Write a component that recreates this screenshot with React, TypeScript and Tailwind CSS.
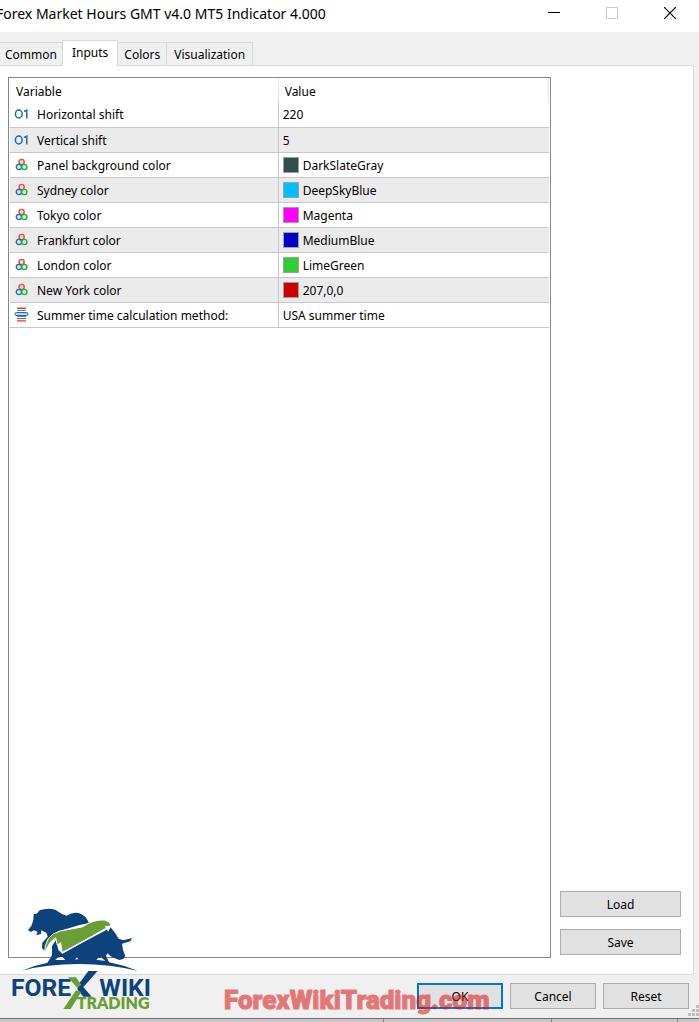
import { useState } from 'react';

type Row = { kind: 'int' | 'color' | 'enum'; name: string; value: string; swatch?: string };

const rows: Row[] = [
  { kind: 'int', name: 'Horizontal shift', value: '220' },
  { kind: 'int', name: 'Vertical shift', value: '5' },
  { kind: 'color', name: 'Panel background color', value: 'DarkSlateGray', swatch: 'bg-[#2f4f4f]' },
  { kind: 'color', name: 'Sydney color', value: 'DeepSkyBlue', swatch: 'bg-[#00bfff]' },
  { kind: 'color', name: 'Tokyo color', value: 'Magenta', swatch: 'bg-[#ff00ff]' },
  { kind: 'color', name: 'Frankfurt color', value: 'MediumBlue', swatch: 'bg-[#0000cd]' },
  { kind: 'color', name: 'London color', value: 'LimeGreen', swatch: 'bg-[#32cd32]' },
  { kind: 'color', name: 'New York color', value: '207,0,0', swatch: 'bg-[#cf0000]' },
  { kind: 'enum', name: 'Summer time calculation method:', value: 'USA summer time' },
];

const tabs = ['Common', 'Inputs', 'Colors', 'Visualization'];

function KindIcon({ kind }: { kind: Row['kind'] }) {
  if (kind === 'int') {
    return (
      <svg className="h-4 w-4 shrink-0" viewBox="0 0 16 16" fill="none" stroke="#1c6ea8" strokeWidth="1.5">
        <ellipse cx="4.8" cy="8" rx="3.4" ry="3.9" />
        <path d="M10 5.5 12.8 4.1V12.5" />
      </svg>
    );
  }
  if (kind === 'color') {
    return (
      <svg className="h-4 w-4 shrink-0" viewBox="0 0 16 16" strokeWidth="1.4">
        <circle cx="7.6" cy="5" r="2.6" stroke="#d9534a" fill="#f8d3cf" />
        <circle cx="4.9" cy="10" r="2.6" stroke="#1f6fae" fill="#d3e6f3" />
        <circle cx="10.3" cy="10" r="2.6" stroke="#1fae3c" fill="#d3f5d5" />
      </svg>
    );
  }
  return (
    <svg className="h-4 w-4 shrink-0" viewBox="0 0 16 16">
      <path d="M3 .5h9M3 14.5h9" stroke="#e9a29b" />
      <path d="M3 1.5h9M3 11.5h9" stroke="#d8423a" />
      <path d="M3 13.5h9" stroke="#e0706a" />
      <path d="M3 3.5h9M3 9.5h9" stroke="#4a8fc0" />
      <rect x="1" y="5.5" width="13" height="3" rx="1.5" fill="#b9d7ea" stroke="#1d6ca5" />
    </svg>
  );
}

function DialogButton({ label, primary = false, className = '' }: { label: string; primary?: boolean; className?: string }) {
  const border = primary ? 'border-2 border-[#0078d7]' : 'border border-[#adadad]';
  return (
    <button type="button" className={`h-[26px] bg-[#e1e1e1] pt-0.5 text-center ${border} ${className}`}>
      {label}
    </button>
  );
}

function Logo() {
  return (
    <svg className="absolute bottom-1 left-2 h-28 w-36" viewBox="24 18 432 336" role="img" aria-label="Forex Wiki Trading">
      {/* bear */}
      <path
        fill="#0c437c"
        d="M84 90 94 78 100 60 101 42 110 41 119 31Q142 22 166 29L186 42 200 47Q216 36 236 39 258 46 267 69L236 76 196 88Q160 96 146 118L133 152 126 144 127 128 143 110 140 99 124 91 123 102 108 106 113 96 102 91 92 96Z"
      />
      {/* bull and legs */}
      <path
        fill="#0c437c"
        d="M140 192 156 166 156 138 168 120 175 150 186 160 330 80 345 98 356 116 370 121 396 114 391 124 366 131 369 150 376 168 370 177 358 180 336 172 322 160 318 168 330 192Z"
      />
      <path fill="#fff" d="M166 180Q172 170 187 171L196 180ZM224 179 231 172 236 180ZM290 180Q292 172 305 173L316 182Z" />
      {/* rising arrow */}
      <path
        fill="#6a9f37"
        stroke="#fff"
        strokeWidth="3"
        d="M134 162Q132 106 180 93L246 81Q282 57 314 60L328 66 333 76 187 160 182 128 172 135 167 114Q146 124 134 162Z"
      />
      <path fill="none" stroke="#fff" strokeWidth="4" d="M187 158 322 86" />
      <path fill="#fff" d="M314 79 333 78 325 95Z" />
      <path fill="#0c437c" d="M66 212Q150 178 238 178 330 178 414 213 330 192 238 192 140 192 66 212Z" />
      <text x="33" y="289" fill="#0c437c" className="font-['Roboto'] text-[74px] font-bold">FORE</text>
      <text x="298" y="289" fill="#0c437c" className="font-['Roboto'] text-[74px] font-bold">WIKI</text>
      <path fill="#0c437c" d="M265 213H293L250 261 275 290H250L232 268 238 250Z" />
      <path fill="#6a9f37" d="M204 232H228L244 254 232 264ZM228 271 244 276 212 327H190Z" />
      <text x="230" y="326" fill="#6a9f37" className="font-['Lato'] text-[48px] font-extrabold">TRADING</text>
    </svg>
  );
}

export default function App() {
  const [active, setActive] = useState('Inputs');

  return (
    <div className="relative flex min-h-screen flex-col overflow-hidden bg-[#f0f0f0] font-['Noto_Sans',sans-serif] text-[12px] leading-4 text-black">
      <header className="flex h-8 items-start justify-between bg-white">
        <h1 className="-ml-1 pt-1 text-[14px] leading-5 whitespace-nowrap">
          Forex Market Hours GMT v4.0 MT5 Indicator 4.000
        </h1>
        <div className="flex">
          <button type="button" aria-label="Minimize" className="flex h-[26px] w-[58px] items-center justify-center">
            <svg width="12" height="12" stroke="#000"><path d="M0 5.5h12" /></svg>
          </button>
          <button type="button" aria-label="Maximize" disabled className="flex h-[26px] w-[58px] items-center justify-center">
            <svg width="12" height="12" fill="none" stroke="#ccc"><path d="M.5.5h11v11H.5z" /></svg>
          </button>
          <button type="button" aria-label="Close" className="flex h-[26px] w-[58px] items-center justify-center">
            <svg width="12" height="12" stroke="#000" strokeWidth="1.2"><path d="m0 0 12 12M12 0 0 12" /></svg>
          </button>
        </div>
      </header>

      <nav role="tablist" className="z-10 -mb-px flex items-end pt-2">
        {tabs.map((tab) => (
          <button
            key={tab}
            type="button"
            role="tab"
            aria-selected={tab === active}
            onClick={() => setActive(tab)}
            className={
              tab === active
                ? 'h-[26px] border border-b-0 border-[#d9d9d9] bg-white px-[9px] pb-0.5'
                : 'h-6 border border-l-0 border-[#d9d9d9] px-1.5 pt-0.5 first:border-r-0 first:px-[5px] last:px-[7px]'
            }
          >
            {tab}
          </button>
        ))}
      </nav>

      <main className="mr-[5px] flex flex-1 border border-l-0 border-[#d9d9d9] bg-white pt-[11px] pr-3 pb-4 pl-2">
        <section className="flex-1 border border-[#828790] px-px">
          <table className="w-full table-fixed border-collapse">
            <thead>
              <tr className="h-6 text-left">
                <th className="w-[49.8%] border-r border-[#e5e5e5] pt-1 pl-1.5 font-normal">Variable</th>
                <th className="border-r border-[#e5e5e5] pt-1 pl-1.5 font-normal">Value</th>
              </tr>
            </thead>
            <tbody>
              {rows.map((row) => (
                <tr key={row.name} className="h-[25px] border-b border-[#c8c8c8] even:bg-[#ebebeb]">
                  <td className="border-r border-[#c8c8c8] pl-1">
                    <div className="flex items-center gap-[7px]">
                      <KindIcon kind={row.kind} />
                      <span className="pt-0.5">{row.name}</span>
                    </div>
                  </td>
                  <td className="pl-1">
                    <div className="flex items-center gap-1">
                      {row.swatch && <span className={`h-4 w-4 border border-[#a0a0a0] ${row.swatch}`} />}
                      <span className="pt-0.5">{row.value}</span>
                    </div>
                  </td>
                </tr>
              ))}
            </tbody>
          </table>
        </section>
        <aside className="ml-[9px] flex w-[121px] flex-col justify-end gap-3 pb-[3px]">
          <DialogButton label="Load" />
          <DialogButton label="Save" />
        </aside>
      </main>

      <footer className="flex h-[43px] justify-end gap-[7px] pt-2 pr-2.5">
        <DialogButton label="OK" primary className="w-[86px]" />
        <DialogButton label="Cancel" className="w-[86px]" />
        <DialogButton label="Reset" className="w-[86px]" />
      </footer>
      <div className="flex h-1 border-t border-[#6e6e6e] bg-[#c8c8c8]">
        <span className="w-[55%] border-r border-[#8a8a8a]" />
        <span className="w-[24%] border-r border-[#8a8a8a]" />
        <span className="w-[18%] border-r border-[#8a8a8a]" />
      </div>

      <svg className="absolute right-0 bottom-1.5 h-3 w-3" fill="#bfbfbf">
        <path d="M9 1h3v3H9zM5 5h3v3H5zM9 5h3v3H9zM1 9h3v3H1zM5 9h3v3H5zM9 9h3v3H9z" />
      </svg>
      <Logo />
      <p className="pointer-events-none absolute bottom-1.5 left-56 font-['Roboto',sans-serif] text-[26px] leading-8 font-black whitespace-nowrap text-[#dc1414] opacity-55 [-webkit-text-stroke:1px_#dc1414]">
        ForexWikiTrading.com
      </p>
    </div>
  );
}
